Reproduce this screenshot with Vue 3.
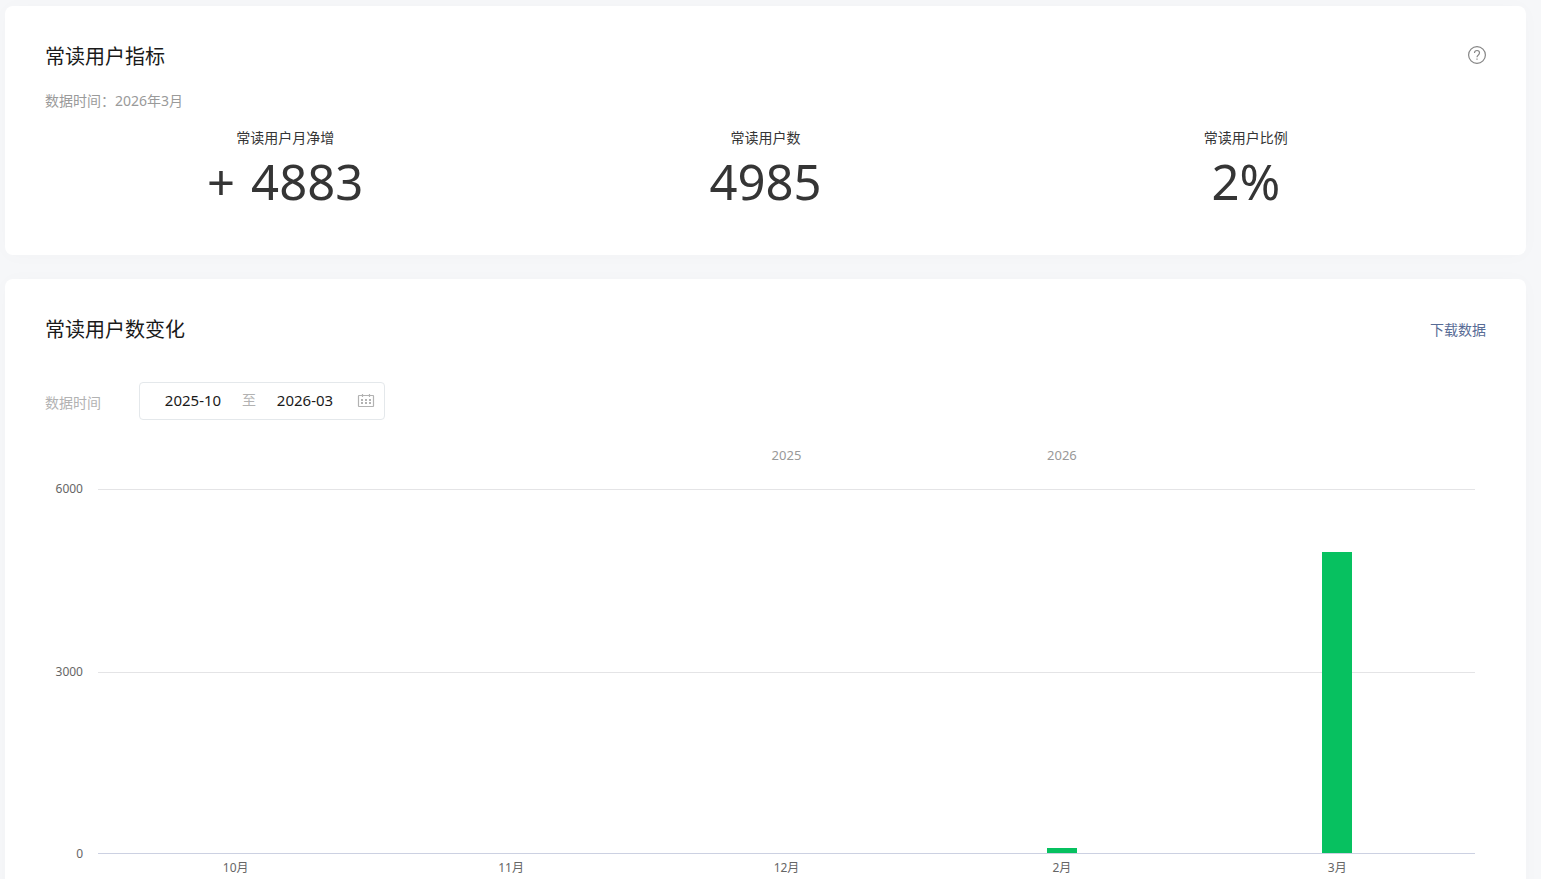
<script setup>
import { ref } from 'vue'

const metrics = [
  { label: '常读用户月净增', sign: '+', value: '4883' },
  { label: '常读用户数', sign: '', value: '4985' },
  { label: '常读用户比例', sign: '', value: '2%' }
]

const startMonth = ref('2025-10')
const endMonth = ref('2026-03')

const maxValue = 6000
const ticks = [6000, 3000, 0]
const months = [
  { name: '10月', year: '', value: 0 },
  { name: '11月', year: '', value: 0 },
  { name: '12月', year: '2025', value: 0 },
  { name: '2月', year: '2026', value: 90 },
  { name: '3月', year: '', value: 4985 }
]
const barHeight = (value) => `${(value / maxValue) * 100}%`
</script>

<template>
  <main class="page" lang="zh-CN">
    <section class="card">
      <header class="card-head">
        <h2 class="title">常读用户指标</h2>
        <button class="icon-button help" type="button" aria-label="指标说明">
          <svg width="18" height="18" viewBox="1 1 18 18" fill="none" stroke="#858585" stroke-width="1.2">
            <circle cx="10" cy="10" r="8.4" />
            <path d="M7.5 8.1C7.500 6.400 8.500 5.500 10 5.500s2.500 1 2.500 2.300c0 1.200-.7 1.800-1.400 2.400-.8.6-1.100 1-1.100 2.100" />
            <path d="M10 13.400v1.400" />
          </svg>
        </button>
      </header>
      <p class="period">数据时间：2026年3月</p>
      <dl class="metrics">
        <div v-for="m in metrics" :key="m.label" class="metric">
          <dt>{{ m.label }}</dt>
          <dd><span v-if="m.sign" class="sign">{{ m.sign }}</span>{{ m.value }}</dd>
        </div>
      </dl>
    </section>

    <section class="card">
      <header class="card-head">
        <h2 class="title">常读用户数变化</h2>
        <a class="download" href="#">下载数据</a>
      </header>

      <div class="filter">
        <label class="filter-label" for="start-month">数据时间</label>
        <div class="range">
          <input id="start-month" v-model="startMonth" class="month" type="text">
          <span class="to">至</span>
          <input v-model="endMonth" class="month" type="text" aria-label="结束月份">
          <button class="icon-button calendar" type="button" aria-label="选择月份">
            <svg width="18" height="16" viewBox="0 0 18 16" fill="none" stroke="#b2b2b2">
              <rect x="1.5" y="3.5" width="15" height="11" rx="0.5" stroke-width="1.2" />
              <path d="M5.500 2v3M12.500 2v3" stroke-width="1.2" />
              <path d="M4 8h10M4 11h10" stroke-width="2" stroke-dasharray="2 2" />
            </svg>
          </button>
        </div>
      </div>

      <div class="chart">
        <div class="columns years">
          <span v-for="m in months" :key="m.name">{{ m.year }}</span>
        </div>
        <div class="ticks">
          <span v-for="t in ticks" :key="t">{{ t }}</span>
        </div>
        <div class="plot">
          <div class="grid-row"></div>
          <div class="grid-row base"></div>
          <div class="columns bars">
            <div v-for="m in months" :key="m.name" class="bar" :style="{ height: barHeight(m.value) }"></div>
          </div>
        </div>
        <div class="columns months">
          <span v-for="m in months" :key="m.name">{{ m.name }}</span>
        </div>
      </div>
    </section>
  </main>
</template>

<style>
body {
  background: #f6f7f9;
}
</style>

<style scoped>
.page {
  display: flex;
  flex-direction: column;
  gap: 24px;
  height: 100vh;
  padding: 6px 15px 0 5px;
  box-sizing: border-box;
  overflow-y: auto;
  scrollbar-width: none;
  font-family: "Noto Sans", "Noto Sans CJK SC", sans-serif;
  font-size: 14px;
  line-height: 20px;
  color: #353535;
}

.card {
  flex: none;
  padding: 37px 40px 40px;
  background: #fff;
  border-radius: 8px;
  box-shadow: 0 1px 20px rgba(0, 0, 0, 0.02);
}

.card-head {
  display: flex;
  align-items: center;
  justify-content: space-between;
  height: 28px;
}

.title {
  margin: 0;
  font-size: 20px;
  font-weight: 400;
  line-height: 28px;
  color: #1a1a1a;
}

.icon-button {
  display: flex;
  padding: 0;
  border: 0;
  background: none;
  cursor: pointer;
}

.help {
  margin-bottom: 4px;
}

.period {
  margin: 20px 0 17px;
  color: #9a9a9a;
}

.metrics {
  display: grid;
  grid-template-columns: repeat(3, 1fr);
  margin: 0;
  text-align: center;
}

.metric dd {
  margin: 0;
  font-size: 49px;
  line-height: 67px;
}

.sign {
  margin-right: 16px;
}

.download {
  color: #576b95;
  text-decoration: none;
}

.filter {
  display: flex;
  align-items: center;
  margin-top: 38px;
}

.filter-label {
  width: 94px;
  padding-top: 4px;
  color: #b2b2b2;
}

.range {
  display: flex;
  align-items: center;
  width: 246px;
  height: 38px;
  padding: 0 9px 2px 14px;
  box-sizing: border-box;
  border: 1px solid #e4e8eb;
  border-radius: 4px;
}

.month {
  width: 78px;
  padding: 0;
  border: 0;
  outline: 0;
  background: none;
  font-family: inherit;
  font-size: 15px;
  line-height: 20px;
  text-align: center;
  color: #1a1a1a;
}

.to {
  width: 34px;
  text-align: center;
  color: #b2b2b2;
}

.calendar {
  margin-left: auto;
}

.chart {
  display: grid;
  grid-template-columns: 38px 1fr;
  column-gap: 15px;
  margin-top: 26px;
  padding-right: 11px;
  font-size: 12px;
  line-height: 16px;
  color: #666;
}

.columns {
  display: grid;
  grid-template-columns: repeat(5, 1fr);
  justify-items: center;
}

.years {
  grid-column: 2;
  height: 18px;
  margin-bottom: 25px;
  font-size: 13px;
  line-height: 18px;
  color: #999;
}

.ticks {
  display: flex;
  flex-direction: column;
  justify-content: space-between;
  margin: -8px 0;
  text-align: right;
}

.plot {
  position: relative;
  display: flex;
  flex-direction: column;
  border-top: 1px solid #e4e4e6;
}

.grid-row {
  height: 183px;
  box-sizing: border-box;
  border-bottom: 1px solid #e4e4e6;
}

.base {
  height: 181px;
  border-bottom-color: #ccd1e2;
}

.bars {
  position: absolute;
  inset: 1px 0;
  align-items: end;
}

.bar {
  width: 30px;
  background: #07c160;
}

.months {
  grid-column: 2;
  margin-top: 6px;
}
</style>
